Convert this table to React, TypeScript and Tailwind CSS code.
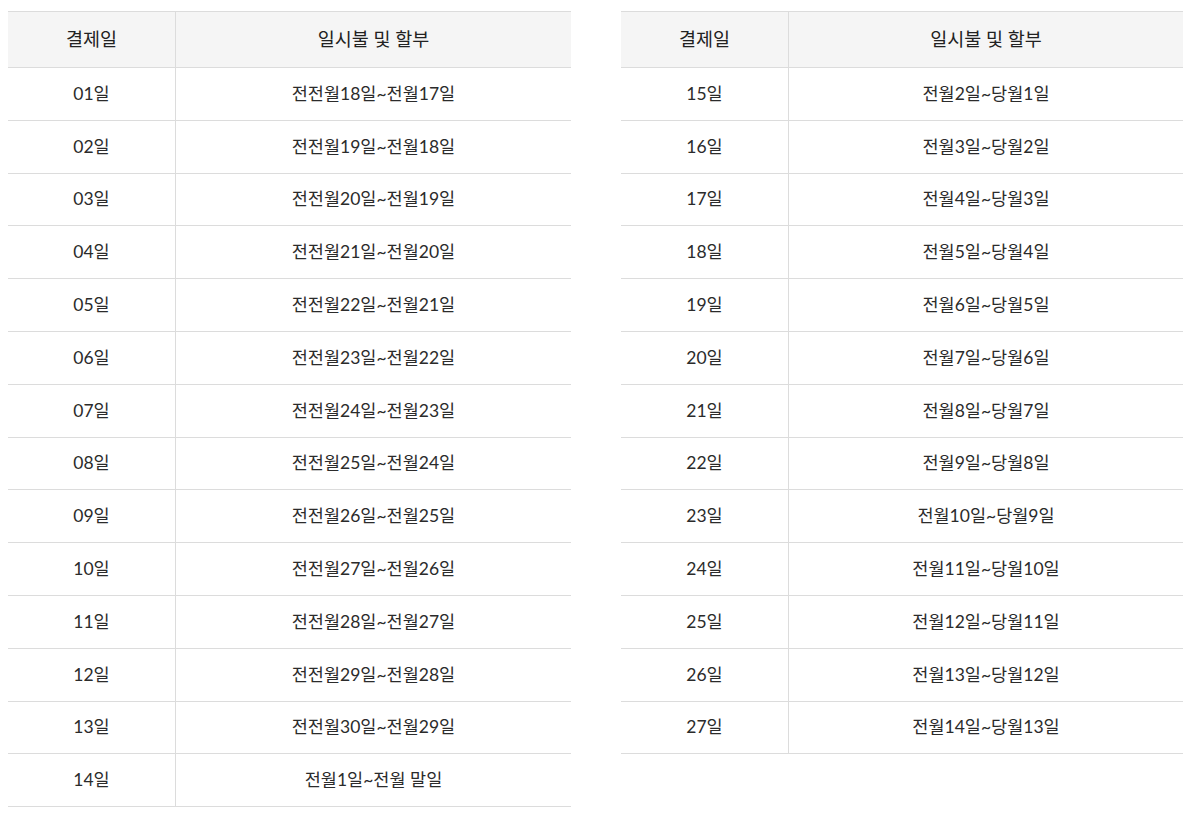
import React from "react";

const left: [string, string][] = [
  ["01일", "전전월18일~전월17일"],
  ["02일", "전전월19일~전월18일"],
  ["03일", "전전월20일~전월19일"],
  ["04일", "전전월21일~전월20일"],
  ["05일", "전전월22일~전월21일"],
  ["06일", "전전월23일~전월22일"],
  ["07일", "전전월24일~전월23일"],
  ["08일", "전전월25일~전월24일"],
  ["09일", "전전월26일~전월25일"],
  ["10일", "전전월27일~전월26일"],
  ["11일", "전전월28일~전월27일"],
  ["12일", "전전월29일~전월28일"],
  ["13일", "전전월30일~전월29일"],
  ["14일", "전월1일~전월 말일"],
];

const right: [string, string][] = [
  ["15일", "전월2일~당월1일"],
  ["16일", "전월3일~당월2일"],
  ["17일", "전월4일~당월3일"],
  ["18일", "전월5일~당월4일"],
  ["19일", "전월6일~당월5일"],
  ["20일", "전월7일~당월6일"],
  ["21일", "전월8일~당월7일"],
  ["22일", "전월9일~당월8일"],
  ["23일", "전월10일~당월9일"],
  ["24일", "전월11일~당월10일"],
  ["25일", "전월12일~당월11일"],
  ["26일", "전월13일~당월12일"],
  ["27일", "전월14일~당월13일"],
];

const PayTable = ({ rows, width }: { rows: [string, string][]; width: string }) => (
  <div className={`${width} border-t border-[#dcdcdc]`}>
    <div className="flex h-[56px] bg-[#f5f5f5] border-b border-[#dcdcdc] text-[18.5px] text-[#222]">
      <div className="w-[168px] flex items-center justify-center border-r border-[#dcdcdc]">결제일</div>
      <div className="flex-1 flex items-center justify-center">일시불 및 할부</div>
    </div>
    {rows.map(([day, range]) => (
      <div key={day} className="flex h-[52.8px] border-b border-[#dcdcdc] text-[17.5px] text-[#2b2b2b]">
        <div className="w-[168px] flex items-center justify-center border-r border-[#dcdcdc]">{day}</div>
        <div className="flex-1 flex items-center justify-center">{range}</div>
      </div>
    ))}
  </div>
);

export default function App() {
  return (
    <div
      className="w-[1192px] h-[816px] bg-white flex items-start gap-[50px] pl-[8px] pt-[11px]"
      style={{ fontFamily: 'Lato, "Noto Sans CJK KR", sans-serif' }}
    >
      <PayTable rows={left} width="w-[563px]" />
      <PayTable rows={right} width="w-[562px]" />
    </div>
  );
}
